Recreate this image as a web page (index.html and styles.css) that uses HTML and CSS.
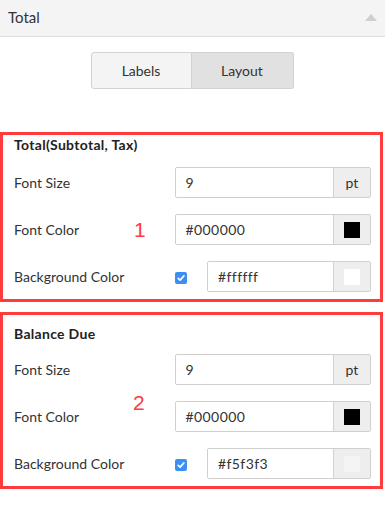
FILE: index.html
```html
<!DOCTYPE html>
<html>
<head>
<meta charset="utf-8">
<link rel="stylesheet" href="styles.css">
</head>
<body>
<div class="header">
  <span class="header-title">Total</span>
  <span class="caret"></span>
</div>
<div class="tabs">
  <div class="tab">Labels</div>
  <div class="tab active">Layout</div>
</div>

<div class="section s1">
  <div class="sec-title">Total(Subtotal, Tax)</div>
  <div class="row">
    <div class="label">Font Size</div>
    <div class="field"><div class="input">9</div><div class="addon">pt</div></div>
  </div>
  <div class="row">
    <div class="label">Font Color</div>
    <div class="field"><div class="input">#000000</div><div class="addon"><span class="swatch black"></span></div></div>
  </div>
  <div class="row">
    <div class="label">Background Color</div>
    <div class="check"><svg width="12" height="12" viewBox="0 0 12 12"><rect width="12" height="12" rx="2" fill="#3d8ef3"/><path d="M3.2 6.3 L5.1 8.1 L8.9 3.9" stroke="#fff" stroke-width="1.6" fill="none" stroke-linecap="round" stroke-linejoin="round"/></svg></div>
    <div class="field narrow"><div class="input">#ffffff</div><div class="addon"><span class="swatch white"></span></div></div>
  </div>
  <span class="num n1">1</span>
</div>

<div class="section s2">
  <div class="sec-title">Balance Due</div>
  <div class="row">
    <div class="label">Font Size</div>
    <div class="field"><div class="input">9</div><div class="addon">pt</div></div>
  </div>
  <div class="row">
    <div class="label">Font Color</div>
    <div class="field"><div class="input">#000000</div><div class="addon"><span class="swatch black"></span></div></div>
  </div>
  <div class="row">
    <div class="label">Background Color</div>
    <div class="check"><svg width="12" height="12" viewBox="0 0 12 12"><rect width="12" height="12" rx="2" fill="#3d8ef3"/><path d="M3.2 6.3 L5.1 8.1 L8.9 3.9" stroke="#fff" stroke-width="1.6" fill="none" stroke-linecap="round" stroke-linejoin="round"/></svg></div>
    <div class="field narrow"><div class="input">#f5f3f3</div><div class="addon"><span class="swatch grey"></span></div></div>
  </div>
  <span class="num n2">2</span>
</div>
</body>
</html>
```
FILE: styles.css
```css
* { box-sizing: border-box; }
body {
  margin: 0;
  width: 385px;
  height: 507px;
  background: #fff;
  font-family: Lato, "Open Sans", sans-serif;
  color: #333;
  font-size: 14px;
  overflow: hidden;
}
.header {
  height: 37px;
  background: #f4f4f4;
  border-bottom: 1px solid #dedede;
  display: flex;
  align-items: center;
  justify-content: space-between;
  padding: 0 8px 2px 8px;
}
.header-title { font-size: 15px; color: #333; }
.caret {
  width: 0; height: 0;
  border-left: 6px solid transparent;
  border-right: 6px solid transparent;
  border-bottom: 7px solid #cfcfcf;
}
.tabs {
  display: flex;
  justify-content: center;
  margin-top: 15px;
  margin-left: -1px;
}
.tab {
  width: 101px;
  height: 37px;
  display: flex;
  align-items: center;
  justify-content: center;
  border: 1px solid #d2d2d2;
  background: #f4f4f4;
  font-size: 14px;
  color: #333;
}
.tab:first-child { border-radius: 3px 0 0 3px; width: 101px; }
.tab.active { background: #e1e1e1; border-left-width: 0; border-radius: 0 3px 3px 0; width: 102px; }
.section {
  position: relative;
  border: 3px solid #ff3b3b;
  width: 383px;
  padding: 0 9px 6px 11px;
}
.s1 { margin-top: 43px; height: 170px; padding-top: 0; }
.s2 { margin-top: 10px; height: 177px; padding-top: 9px; }
.sec-title {
  font-weight: bold;
  font-size: 14px;
  letter-spacing: 0.3px;
  color: #222;
  height: 20px;
  line-height: 20px;
}
.s1 .sec-title { margin-bottom: 12px; }
.s2 .sec-title { margin-bottom: 10px; }
.row {
  display: flex;
  align-items: center;
  height: 31px;
  margin-bottom: 16px;
}
.row:last-of-type { margin-bottom: 0; }
.label { width: 161px; font-size: 14px; color: #333; }
.field {
  display: flex;
  width: 197px;
  height: 31px;
  border: 1px solid #cfcfcf;
  border-radius: 2px;
}
.field.narrow { width: 164px; margin-left: auto; }
.input {
  flex: 1;
  display: flex;
  align-items: center;
  padding-left: 10px;
  font-size: 14px;
  letter-spacing: 0.4px;
  color: #333;
}
.addon {
  width: 37px;
  background: #eee;
  border-left: 1px solid #d2d2d2;
  display: flex;
  align-items: center;
  justify-content: center;
  font-size: 14px;
}
.swatch { width: 16px; height: 16px; display: block; }
.swatch.black { background: #000; }
.swatch.white { background: #fff; }
.swatch.grey { background: #f5f3f3; }
.check { display: flex; align-items: center; padding-top: 2px; }
.num {
  position: absolute;
  color: #ff3b3b;
  font-family: "Liberation Sans", Arial, sans-serif;
  font-size: 21px;
  line-height: 1;
}
.n1 { left: 131px; top: 84px; }
.n2 { left: 130px; top: 77px; }
```
